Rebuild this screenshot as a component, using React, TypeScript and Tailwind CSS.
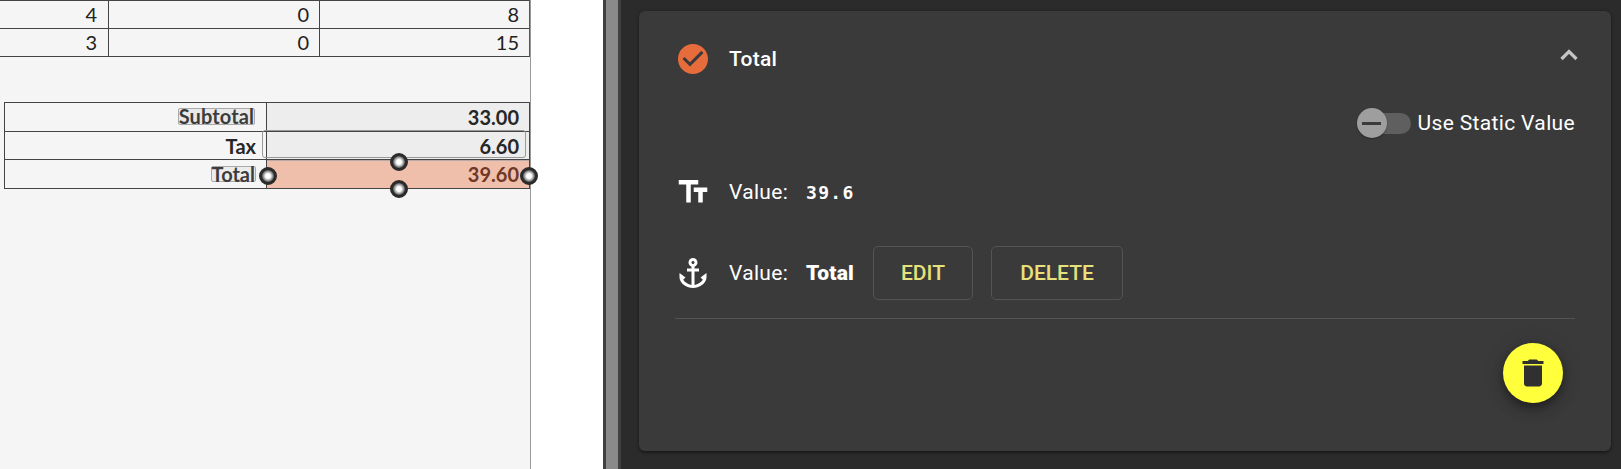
import React from "react";
import { MdAnchor, MdCheckCircle, MdDelete, MdTextFields } from "react-icons/md";

const lineItems = [
  { quantity: "4", discount: "0", amount: "8" },
  { quantity: "3", discount: "0", amount: "15" },
];

function Handle({ className }: { className: string }) {
  return (
    <span
      className={`absolute size-[18px] rounded-full border-[3px] border-[#2b2b2b] bg-[radial-gradient(circle,#ffffff_0%,#ffffff_28%,#555555_72%)] ${className}`}
    />
  );
}

function LineItems() {
  return (
    <div className="flex h-[57px] flex-col border-r border-[#555] text-[20px] text-[#222]">
      {lineItems.map((item) => (
        <div key={item.amount} className="flex h-7 border-t border-[#444] text-right leading-[26px]">
          <div className="w-[109px] border-r border-[#444] pr-[11px]">{item.quantity}</div>
          <div className="w-[211px] border-r border-[#444] pr-[10px]">{item.discount}</div>
          <div className="flex-1 pr-[10px]">{item.amount}</div>
        </div>
      ))}
      <div className="h-px bg-[#444]" />
    </div>
  );
}

function Totals() {
  return (
    <div className="relative ml-1 mt-[45px] h-[87px] border-b border-r border-[#444] text-right text-[20px] font-bold text-[#262626]">
      <div className="flex h-[29px] border-l border-t border-[#444] leading-[28px]">
        <div className="flex w-[262px] items-center justify-end border-r border-[#444] pr-[11px]">
          <span className="mt-[-1px] h-[17px] rounded-[2px] border border-[#aaa] bg-[#e9e9e9] leading-[15px] tracking-[0.1px] text-[#3c3c3c]">
            Subtotal
          </span>
        </div>
        <div className="flex-1 bg-[#ededed] pr-[10px]">33.00</div>
      </div>
      <div className="flex h-7 border-l border-t border-[#444] leading-[28px]">
        <div className="w-[262px] border-r border-[#444] pr-[10px]">Tax</div>
        <div className="flex-1 bg-[#ededed] pr-[10px]">6.60</div>
      </div>
      <div className="flex h-[29px] border-l border-t border-[#444] leading-[29px]">
        <div className="flex w-[262px] items-center justify-end border-r border-[#444] pr-[10px]">
          <span className="h-[16px] rounded-[2px] border border-[#aaa] bg-[#ececec] leading-[14px] text-[#3c3c3c]">
            Total
          </span>
        </div>
        <div className="flex-1 border-t border-[#b9aaa5] bg-[#f0bfab] pr-[10px] leading-[27px] text-[#6f3828]">39.60</div>
      </div>
      <span className="absolute left-[258px] top-[28px] h-[28px] w-[264px] rounded-[3px] border border-[#999]" />
      <Handle className="left-[255px] top-[65px]" />
      <Handle className="left-[386px] top-[51px]" />
      <Handle className="left-[386px] top-[78px]" />
      <Handle className="left-[516px] top-[65px]" />
    </div>
  );
}

function OutlineButton({ label, className }: { label: string; className: string }) {
  return (
    <button
      className={`h-[54px] rounded-[5px] border border-[#545454] pt-[2px] text-[21px] font-medium text-[#e8e07a] ${className}`}
    >
      {label}
    </button>
  );
}

export default function App() {
  return (
    <div className="flex h-[469px] w-[1621px] overflow-hidden bg-[#2b2b2b] font-['Roboto',sans-serif] text-white">
      <div className="w-[603px] shrink-0 bg-white">
        <div className="h-full w-[531px] border-r border-[#999] bg-[#f5f5f5] font-['Lato',sans-serif]">
          <LineItems />
          <Totals />
        </div>
      </div>
      <div className="w-[18px] shrink-0 border-x-[3px] border-[#404040] bg-[#8a8a8a]" />
      <div className="flex-1 pb-[18px] pl-[18px] pr-[10px] pt-[11px]">
        <div className="flex h-full flex-col rounded-[6px] bg-[#3a3a3a] px-9 text-[21px] shadow-[0_2px_3px_rgba(0,0,0,0.35),0_0_3px_rgba(0,0,0,0.2)]">
          <div className="flex h-24 items-center">
            <MdCheckCircle size={36} className="shrink-0 text-[#e66c3c]" />
            <span className="ml-[18px] flex-1 pt-[2px] font-medium tracking-[0.2px]">Total</span>
            <svg width="18" height="12" viewBox="0 0 18 12" className="mb-[8px] mr-[-3px]" fill="none">
              <path d="M1.5 10 9 2.5 16.5 10" stroke="#c4c4c4" strokeWidth="3.2" />
            </svg>
          </div>
          <div className="flex h-8 items-center justify-end">
            <div className="flex h-[21px] w-[54px] items-center rounded-full bg-[#5f5f5f]">
              <div className="flex size-[30px] items-center justify-center rounded-full bg-[#9e9e9e] shadow-[0_1px_2px_rgba(0,0,0,0.3)]">
                <div className="h-[3px] w-[19px] bg-[#3a3a3a]" />
              </div>
            </div>
            <span className="ml-[7px] pt-[2px] tracking-[0.35px]">Use Static Value</span>
          </div>
          <div className="flex h-[106px] items-center">
            <MdTextFields size={36} className="shrink-0" />
            <span className="ml-[18px] w-[77px] pt-[2px] tracking-[0.3px]">Value:</span>
            <span className="mt-[1px] font-['DejaVu_Sans_Mono',monospace] text-[18px] font-bold tracking-[1.3px]">39.6</span>
          </div>
          <div className="flex h-14 items-center">
            <MdAnchor size={36} className="shrink-0" />
            <span className="ml-[18px] w-[77px] pt-[2px] tracking-[0.3px]">Value:</span>
            <span className="w-[67px] pt-[2px] font-black tracking-[0.2px]">Total</span>
            <OutlineButton label="EDIT" className="w-[100px]" />
            <OutlineButton label="DELETE" className="ml-[18px] w-[132px]" />
          </div>
          <div className="mt-[17px] h-px shrink-0 bg-[#545454]" />
          <button className="mr-3 mt-6 flex size-[60px] shrink-0 items-center justify-center self-end rounded-full bg-[#ffff3b] text-[#303030] shadow-[0_4px_7px_-1px_rgba(0,0,0,0.3),0_8px_14px_rgba(0,0,0,0.18),0_1px_22px_rgba(0,0,0,0.12)]">
            <MdDelete size={36} />
          </button>
        </div>
      </div>
    </div>
  );
}
